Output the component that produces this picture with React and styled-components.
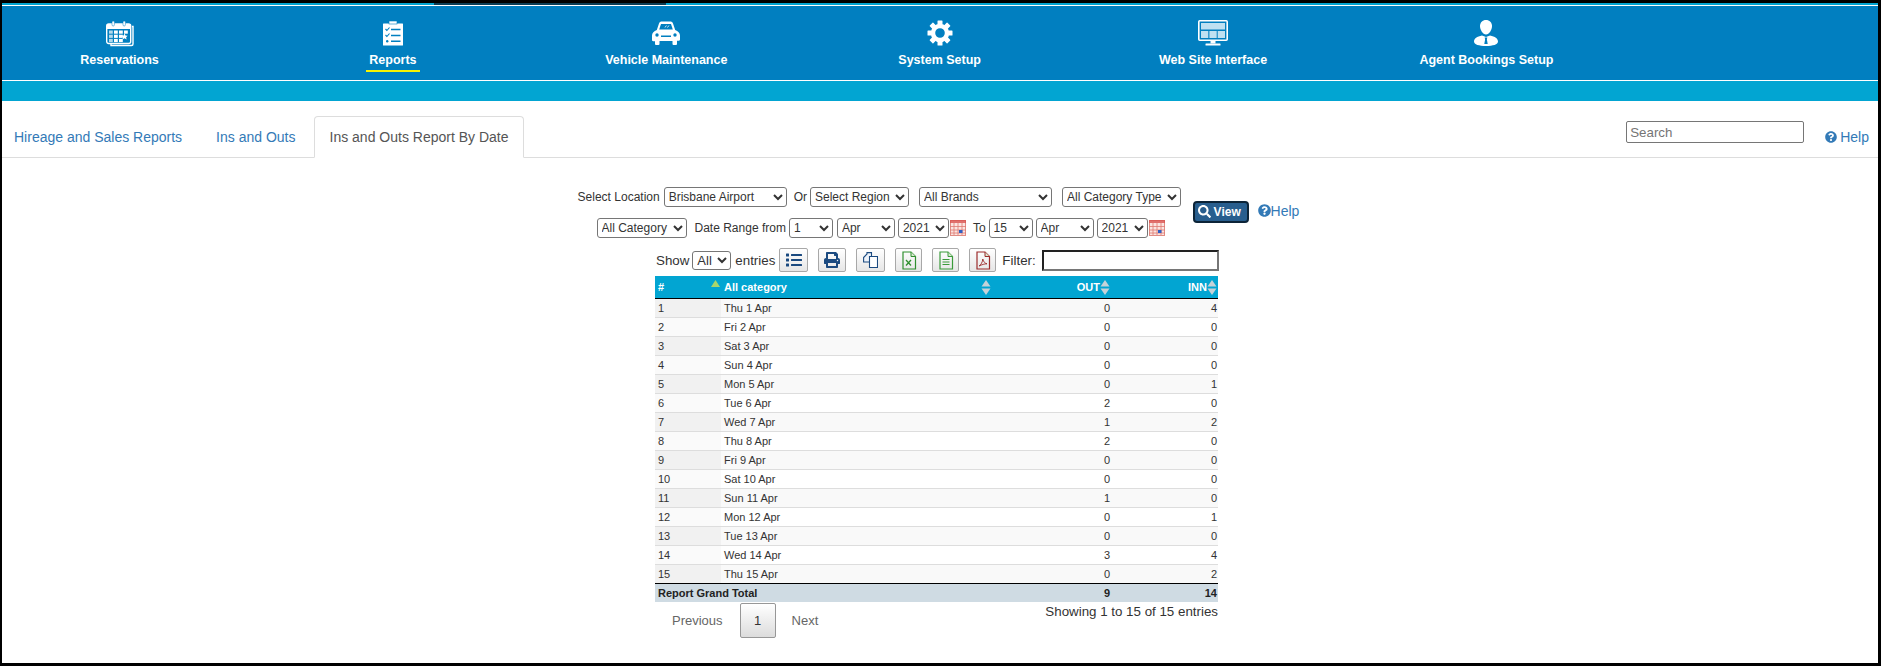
import React from 'react'
import styled, { createGlobalStyle } from 'styled-components'
import { FaList, FaPrint, FaQuestionCircle, FaSearch } from 'react-icons/fa'

const GlobalStyle = createGlobalStyle`
  html, body { margin: 0; padding: 0; background: #000; }
  body { font-family: "Liberation Sans", Arial, sans-serif; color: #333; }
  * { box-sizing: border-box; }
`

const Frame = styled.div`
  width: 1881px;
  height: 666px;
  padding: 3px 3px 3px 2px;
  background: #000;
  overflow: hidden;
`

const Page = styled.div`
  height: 660px;
  background: #fff;
  display: flex;
  flex-direction: column;
`

const TopStrip = styled.div`
  height: 2px;
  flex: none;
  display: flex;
  background: #02a5d2;
`

const StripDark = styled.div`
  width: 232px;
  margin-left: 432px;
  background: #0b3d55;
`

const Nav = styled.nav`
  height: 76px;
  flex: none;
  display: flex;
  gap: 113.4px;
  padding: 10px 0 0 37.5px;
  background: #017fc0;
  border-top: 1px solid #fff;
  border-bottom: 1px solid #fff;
`

const NavItem = styled.a`
  width: 160px;
  flex: none;
  display: flex;
  flex-direction: column;
  align-items: center;
  color: #fff;
  text-decoration: none;
`

const NavIcon = styled.div`
  height: 34px;
  display: flex;
  align-items: center;
  justify-content: center;
`

const NavLabel = styled.span`
  margin-top: 3px;
  padding: 0 3px 3px;
  font-size: 12.5px;
  line-height: 14px;
  font-weight: 700;
  white-space: nowrap;
  border-bottom: 2px solid ${p => (p.$active ? '#f7f200' : 'transparent')};
`

const SubBar = styled.div`
  height: 20px;
  flex: none;
  background: #02a5d2;
`

const TabBar = styled.div`
  height: 42px;
  margin-top: 15px;
  flex: none;
  display: flex;
  align-items: stretch;
  border-bottom: 1px solid #ddd;
`

const Tab = styled.a`
  margin-right: 4px;
  padding: 0 15px;
  margin-bottom: ${p => (p.$active ? '-1px' : '0')};
  display: flex;
  align-items: center;
  font-size: 14px;
  color: ${p => (p.$active ? '#555' : '#337ab7')};
  background: #fff;
  border: 1px solid ${p => (p.$active ? '#ddd' : 'transparent')};
  border-bottom-color: ${p => (p.$active ? '#fff' : 'transparent')};
  border-radius: 4px 4px 0 0;
  &:first-child { padding: 0 13px 0 11px; }
  &:nth-child(2) { margin-right: 2px; }
`

const TabTools = styled.div`
  margin-left: auto;
  padding-right: 9px;
  display: flex;
  align-items: flex-start;
`

const SearchInput = styled.input`
  width: 178px;
  height: 22px;
  margin-top: 5px;
  padding: 1px 3px;
  font-family: "Liberation Sans", Arial, sans-serif;
  font-size: 13.33px;
  border: 1px solid #767676;
  border-radius: 2px;
  &::placeholder { color: #757575; }
`

const HelpLink = styled.a`
  display: inline-flex;
  align-items: center;
  gap: ${p => p.$gap ?? 3}px;
  margin-left: ${p => p.$left || 0}px;
  margin-top: ${p => p.$top || 0}px;
  font-size: 14px;
  color: #337ab7;
`

const Content = styled.div`
  padding-top: 29px;
  display: flex;
  flex-direction: column;
  align-items: center;
`

const FilterArea = styled.div`
  margin-left: -3px;
  display: flex;
  align-items: center;
`

const FilterRows = styled.div`
  width: 603px;
  display: flex;
  flex-direction: column;
  gap: 11px;
`

const FilterRow = styled.div`
  height: 20px;
  display: flex;
  align-items: center;
  justify-content: ${p => (p.$end ? 'flex-end' : 'flex-start')};
  padding-right: ${p => p.$pr || 0}px;
  font-size: 12px;
  white-space: nowrap;
`

const Label = styled.span`
  margin: 0 ${p => p.$right ?? 3}px 0 ${p => p.$left ?? 0}px;
  font-size: ${p => p.$size || 12}px;
`

const Select = styled.select`
  width: ${p => p.$w}px;
  height: ${p => p.$h || 20}px;
  margin-right: ${p => p.$right || 0}px;
  padding: 0;
  flex: none;
  font-family: "Liberation Sans", Arial, sans-serif;
  font-size: ${p => p.$size || 12}px;
  color: #333;
  background: #fff;
  border: 1px solid #767676;
  border-radius: 3px;
`

const CalendarMark = styled.svg`
  flex: none;
  margin-left: 1px;
`

const ViewButton = styled.button`
  width: 56px;
  height: 22px;
  margin-left: 12px;
  margin-top: -2px;
  padding: 0 0 0 3px;
  display: flex;
  align-items: center;
  gap: 3px;
  font-family: "Liberation Sans", Arial, sans-serif;
  font-size: 12px;
  font-weight: 700;
  color: #fff;
  background: #285e8e;
  border: 2px solid #0c2438;
  border-radius: 4px;
`

const Toolbar = styled.div`
  width: 564px;
  height: 24px;
  margin: 10px 0 4px -6px;
  padding-left: 1px;
  display: flex;
  align-items: center;
`

const ExportButton = styled.button`
  width: ${p => p.$w || 28}px;
  height: 24px;
  margin-right: ${p => p.$right ?? 10}px;
  padding: 0;
  flex: none;
  display: flex;
  align-items: center;
  justify-content: center;
  color: #1b4a80;
  background: linear-gradient(#fff, #e6e6e6);
  border: 1px solid #a8a8a8;
  border-radius: 2px;
`

const FilterInput = styled.input`
  width: 177px;
  height: 21px;
  margin-left: auto;
  border-style: solid;
  border-width: 2px;
  border-color: #222 #767676 #767676 #222;
`

const TableWrap = styled.div`
  width: 564px;
  margin-left: -6px;
`

const Table = styled.table`
  width: 563px;
  table-layout: fixed;
  border-collapse: collapse;
  font-size: 11px;
`

const Th = styled.th`
  width: ${p => p.$w}px;
  height: 22px;
  padding: 0 1px 0 ${p => (p.$pad ? 3 : 0)}px;
  font-size: 11px;
  color: #fff;
  background: #02a5d2;
  border-bottom: 1px solid #000;
`

const ThInner = styled.div`
  height: 22px;
  display: flex;
  align-items: center;
  justify-content: ${p => (p.$right ? 'flex-end' : 'space-between')};
`

const SortedMark = styled.svg`
  align-self: flex-start;
  margin: 4px 0 0 0;
`

const Row = styled.tr`
  height: 19px;
  background: ${p => (p.$odd ? '#f9f9f9' : '#fff')};
`

const Td = styled.td`
  height: 19px;
  padding: 0 ${p => (p.$right ? 1 : 0)}px 0 3px;
  text-align: ${p => (p.$right ? 'right' : 'left')};
  color: #333;
  background: ${p => (p.$sorted ? (p.$odd ? '#f1f1f1' : '#fafafa') : 'transparent')};
  border-bottom: 1px solid ${p => (p.$last ? '#000' : '#ddd')};
`

const FootCell = styled.td`
  height: 18px;
  padding: 0 ${p => (p.$right ? 1 : 0)}px 0 3px;
  text-align: ${p => (p.$right ? 'right' : 'left')};
  font-weight: 700;
  color: #222;
  background: #cfdbe3;
`

const TableFoot = styled.div`
  display: flex;
  justify-content: space-between;
  align-items: flex-start;
  padding: 1px 1px 0 1px;
`

const Pager = styled.div`
  display: flex;
  align-items: center;
`

const PageLink = styled.a`
  padding: 0 17px 0 16px;
  font-size: 13px;
  color: #666;
`

const PageCurrent = styled.a`
  width: 36px;
  height: 35px;
  display: flex;
  align-items: center;
  justify-content: center;
  font-size: 13px;
  color: #333;
  background: linear-gradient(#fff, #dcdcdc);
  border: 1px solid #979797;
  border-radius: 2px;
`

const Info = styled.div`
  padding-top: 1px;
  font-size: 13.33px;
  color: #333;
`

const BLUE = '#017fc0'

const CalendarIcon = () => (
  <svg width="28" height="27" viewBox="0 0 28 27">
    <path d="M26 6.5h1V24a1.5 1.5 0 0 1-1.5 1.5H5V24" fill="none" stroke="#fff" strokeWidth="1.4" />
    <rect x="0.7" y="4" width="24" height="19.5" rx="2" fill={BLUE} stroke="#fff" strokeWidth="1.4" />
    <rect x="1" y="4" width="23.5" height="5" fill="#fff" />
    <rect x="6" y="1" width="2.4" height="5" rx="1.2" fill="#fff" stroke={BLUE} strokeWidth="0.5" />
    <rect x="17" y="1" width="2.4" height="5" rx="1.2" fill="#fff" stroke={BLUE} strokeWidth="0.5" />
    {[0, 1, 2, 3].map(c => [0, 1, 2].map(r => (
      c === 3 && r > 0 ? null : (
        <rect key={`${c}-${r}`} x={3 + c * 5} y={10.5 + r * 4.2} width="3.8" height="3.2" fill="#fff" opacity={c === 0 ? 0.7 : 1} />
      )
    )))}
    <path d="M18.5 13.5l1 2 2.2.2-1.6 1.5.5 2.2-2.1-1.1-2 1.1.5-2.2-1.7-1.5 2.3-.2z" fill="#fff" />
  </svg>
)

const ClipboardIcon = () => (
  <svg width="20" height="25" viewBox="0 0 20 25">
    <rect x="0" y="2.5" width="20" height="22" rx="0.5" fill="#fff" />
    <rect x="6" y="0" width="8" height="3" fill="#fff" stroke={BLUE} strokeWidth="0.6" />
    <path d="M2.5 8l1.4 1.5L6.5 6.5M2.5 14l1.4 1.5 2.6-3" fill="none" stroke={BLUE} strokeWidth="1.1" />
    <rect x="3" y="19" width="2.4" height="2.4" rx="1.2" fill={BLUE} />
    <path d="M8 8.5h9.5M8 14.5h9.5M8 20.2h9.5" stroke={BLUE} strokeWidth="1.5" />
  </svg>
)

const CarIcon = () => (
  <svg width="30" height="24" viewBox="0 0 30 24">
    <path d="M8 2.5C8.5 1 9.5.5 11 .5h8c1.500 0 2.500.5 3 2l2.200 6.500c2.800 1 4.800 3 4.800 5.500v4c0 .8-.5 1.200-1.200 1.200H26V23a1 1 0 0 1-1 1h-2.500a1 1 0 0 1-1-1v-3h-13v3a1 1 0 0 1-1 1H5a1 1 0 0 1-1-1v-2.800H2.200C1.500 20.200 1 19.800 1 19v-4.500C1 12 3 10 5.800 9z" fill="#fff" />
    <path d="M10 3h10l1.800 5.500H8.200z" fill={BLUE} />
    <path d="M14 6.500l1.400-2M16.500 6.500l1.400-2" stroke="#fff" strokeWidth="0.8" />
    <circle cx="6" cy="14" r="1.700" fill={BLUE} />
    <circle cx="24" cy="14" r="1.700" fill={BLUE} />
    <rect x="10" y="14.500" width="10" height="1.500" fill={BLUE} />
  </svg>
)

const GearIcon = () => (
  <svg width="26" height="26" viewBox="0 0 26 26">
    {[0, 45, 90, 135, 180, 225, 270, 315].map(a => (
      <rect key={a} x="10.500" y="0.500" width="5" height="5" rx="0.6" fill="#fff" transform={`rotate(${a} 13 13)`} />
    ))}
    <circle cx="13" cy="13" r="7" fill="none" stroke="#fff" strokeWidth="4.400" />
  </svg>
)

const MonitorIcon = () => (
  <svg width="30" height="26" viewBox="0 0 30 26">
    <rect x="0.800" y="0.800" width="28.400" height="19.400" rx="1" fill="none" stroke="#fff" strokeWidth="1.600" />
    <rect x="3" y="3" width="24" height="6.500" fill="#bfe0f1" />
    <rect x="3" y="11" width="7.300" height="7" fill="#bfe0f1" />
    <rect x="11.400" y="11" width="7.300" height="7" fill="#bfe0f1" />
    <rect x="19.700" y="11" width="7.300" height="7" fill="#bfe0f1" />
    <rect x="12.500" y="20" width="5" height="3.500" fill="#fff" />
    <rect x="7.500" y="23.500" width="15" height="2" rx="0.500" fill="#fff" />
  </svg>
)

const AgentIcon = () => (
  <svg width="24" height="26" viewBox="0 0 24 26">
    <path d="M12 0c3.500 0 6 2.600 6 6 0 3.800-2.800 8.500-6 8.500S6 9.800 6 6c0-3.400 2.500-6 6-6z" fill="#fff" />
    <path d="M8 15.500C3 16.500 0 18.500 0 21.500 0 24.500 5 26 12 26s12-1.500 12-4.500c0-3-3-5-8-6L12 17z" fill="#fff" />
    <path d="M10.700 17.500h2.600l-.4 2 .8 4.500h-3.400l.8-4.500z" fill={BLUE} />
  </svg>
)

const SortArrows = () => (
  <svg width="10" height="15" viewBox="0 0 10 15" style={{ flex: 'none' }}>
    <path d="M5 0l4.500 6.500h-9z" fill="#c5d2d8" />
    <path d="M5 15l4.500-6.500h-9z" fill="#c5d2d8" />
  </svg>
)

const DocOutline = ({ color, children }) => (
  <svg width="16" height="19" viewBox="0 0 16 19">
    <path d="M2 1h8l4.500 4.500V18H2z" fill="none" stroke={color} strokeWidth="1.200" />
    <path d="M10 1v4.500h4.500" fill="#d9e8d0" stroke={color} strokeWidth="1" />
    {children}
  </svg>
)

const CopyIcon = () => (
  <svg width="15" height="16" viewBox="0 0 15 16">
    <path d="M.6 5.500L4 2V.6h4.500v9.400H.6z" fill="#eef3fa" stroke="#1b4a80" strokeWidth="1.100" />
    <path d="M6.500 4.500h8v11h-8z" fill="#fff" stroke="#1b4a80" strokeWidth="1.100" />
  </svg>
)

const CalendarSmall = () => (
  <CalendarMark width="16" height="16" viewBox="0 0 16 16">
    <rect x="0.500" y="0.500" width="15" height="15" fill="#fbe4e0" stroke="#e08c84" />
    <rect x="0" y="0" width="16" height="3" fill="#d9534f" opacity="0.8" />
    <path d="M4 3v12M8 3v12M12 3v12M0 6.500h16M0 10h16M0 13h16" stroke="#e07a72" strokeWidth="0.800" />
    <rect x="9" y="10" width="3.500" height="3" fill="#2f5fc4" />
  </CalendarMark>
)

const navItems = [
  { label: 'Reservations', icon: <CalendarIcon /> },
  { label: 'Reports', icon: <ClipboardIcon />, active: true },
  { label: 'Vehicle Maintenance', icon: <CarIcon /> },
  { label: 'System Setup', icon: <GearIcon /> },
  { label: 'Web Site Interface', icon: <MonitorIcon /> },
  { label: 'Agent Bookings Setup', icon: <AgentIcon /> },
]

const rows = [
  ['Thu 1 Apr', 0, 4], ['Fri 2 Apr', 0, 0], ['Sat 3 Apr', 0, 0], ['Sun 4 Apr', 0, 0],
  ['Mon 5 Apr', 0, 1], ['Tue 6 Apr', 2, 0], ['Wed 7 Apr', 1, 2], ['Thu 8 Apr', 2, 0],
  ['Fri 9 Apr', 0, 0], ['Sat 10 Apr', 0, 0], ['Sun 11 Apr', 1, 0], ['Mon 12 Apr', 0, 1],
  ['Tue 13 Apr', 0, 0], ['Wed 14 Apr', 3, 4], ['Thu 15 Apr', 0, 2],
]

const Choice = ({ value, ...rest }) => (
  <Select defaultValue={value} {...rest}>
    <option>{value}</option>
  </Select>
)

export default function App() {
  return (
    <Frame>
      <GlobalStyle />
      <Page>
        <TopStrip><StripDark /></TopStrip>
        <Nav>
          {navItems.map(item => (
            <NavItem key={item.label}>
              <NavIcon>{item.icon}</NavIcon>
              <NavLabel $active={item.active}>{item.label}</NavLabel>
            </NavItem>
          ))}
        </Nav>
        <SubBar />
        <TabBar>
          <Tab>Hireage and Sales Reports</Tab>
          <Tab>Ins and Outs</Tab>
          <Tab $active>Ins and Outs Report By Date</Tab>
          <TabTools>
            <SearchInput placeholder="Search" />
            <HelpLink $left={21} $top={13}><FaQuestionCircle size={12} />Help</HelpLink>
          </TabTools>
        </TabBar>
        <Content>
          <FilterArea>
            <FilterRows>
              <FilterRow>
                <Label $right={4}>Select Location</Label>
                <Choice value="Brisbane Airport" $w={123} />
                <Label $left={7}>Or</Label>
                <Choice value="Select Region" $w={99} $right={10} />
                <Choice value="All Brands" $w={133} $right={10} />
                <Choice value="All Category Type" $w={119} />
              </FilterRow>
              <FilterRow $end $pr={16}>
                <Choice value="All Category" $w={90} />
                <Label $left={8}>Date Range from</Label>
                <Choice value="1" $w={44} $right={4} />
                <Choice value="Apr" $w={58} $right={3} />
                <Choice value="2021" $w={51} />
                <CalendarSmall />
                <Label $left={7}>To</Label>
                <Choice value="15" $w={44} $right={3} />
                <Choice value="Apr" $w={58} $right={3} />
                <Choice value="2021" $w={51} />
                <CalendarSmall />
              </FilterRow>
            </FilterRows>
            <ViewButton><FaSearch size={13} />View</ViewButton>
            <HelpLink $left={9} $gap={0} $top={-4}><FaQuestionCircle size={13} />Help</HelpLink>
          </FilterArea>
          <Toolbar>
            <Label $right={3} $size={13.33}>Show</Label>
            <Choice value="All" $w={39} $h={19} $size={13} $right={4} />
            <Label $right={4} $size={13.33}>entries</Label>
            <ExportButton $w={29}><FaList size={16} /></ExportButton>
            <ExportButton><FaPrint size={16} /></ExportButton>
            <ExportButton $w={29}><CopyIcon /></ExportButton>
            <ExportButton $w={27}>
              <DocOutline color="#2f8f2f">
                <path d="M5 9l5 5.500M10 9l-5 5.500" stroke="#2f8f2f" strokeWidth="1.300" />
              </DocOutline>
            </ExportButton>
            <ExportButton $w={27}>
              <DocOutline color="#3b9b3b">
                <path d="M4.500 8.500h7M4.500 11h7M4.500 13.500h7" stroke="#3b9b3b" strokeWidth="1" />
              </DocOutline>
            </ExportButton>
            <ExportButton $w={27} $right={6}>
              <DocOutline color="#9c2b2b">
                <path d="M4 15c2-1 3.500-4 3.800-7 .6 3 2.500 4.500 4.200 4.800-2.500 0-5 .8-8 2.200z" fill="none" stroke="#9c2b2b" strokeWidth="0.900" />
              </DocOutline>
            </ExportButton>
            <Label $right={0} $size={13.33}>Filter:</Label>
            <FilterInput />
          </Toolbar>
          <TableWrap>
            <Table>
              <thead>
                <tr>
                  <Th $w={66} $pad>
                    <ThInner>
                      #
                      <SortedMark width="9" height="7" viewBox="0 0 9 7"><path d="M4.500 0L9 7H0z" fill="#a9d66c" /></SortedMark>
                    </ThInner>
                  </Th>
                  <Th $w={271} $pad>
                    <ThInner>All category<SortArrows /></ThInner>
                  </Th>
                  <Th $w={119}>
                    <ThInner $right>OUT<SortArrows /></ThInner>
                  </Th>
                  <Th $w={107}>
                    <ThInner $right>INN<SortArrows /></ThInner>
                  </Th>
                </tr>
              </thead>
              <tbody>
                {rows.map((r, i) => {
                  const odd = i % 2 === 0
                  const last = i === rows.length - 1
                  return (
                    <Row key={r[0]} $odd={odd}>
                      <Td $sorted $odd={odd} $last={last}>{i + 1}</Td>
                      <Td $last={last}>{r[0]}</Td>
                      <Td $right $last={last}>{r[1]}</Td>
                      <Td $right $last={last}>{r[2]}</Td>
                    </Row>
                  )
                })}
              </tbody>
              <tfoot>
                <tr>
                  <FootCell colSpan={2}>Report Grand Total</FootCell>
                  <FootCell $right>9</FootCell>
                  <FootCell $right>14</FootCell>
                </tr>
              </tfoot>
            </Table>
            <TableFoot>
              <Pager>
                <PageLink>Previous</PageLink>
                <PageCurrent>1</PageCurrent>
                <PageLink>Next</PageLink>
              </Pager>
              <Info>Showing 1 to 15 of 15 entries</Info>
            </TableFoot>
          </TableWrap>
        </Content>
      </Page>
    </Frame>
  )
}
